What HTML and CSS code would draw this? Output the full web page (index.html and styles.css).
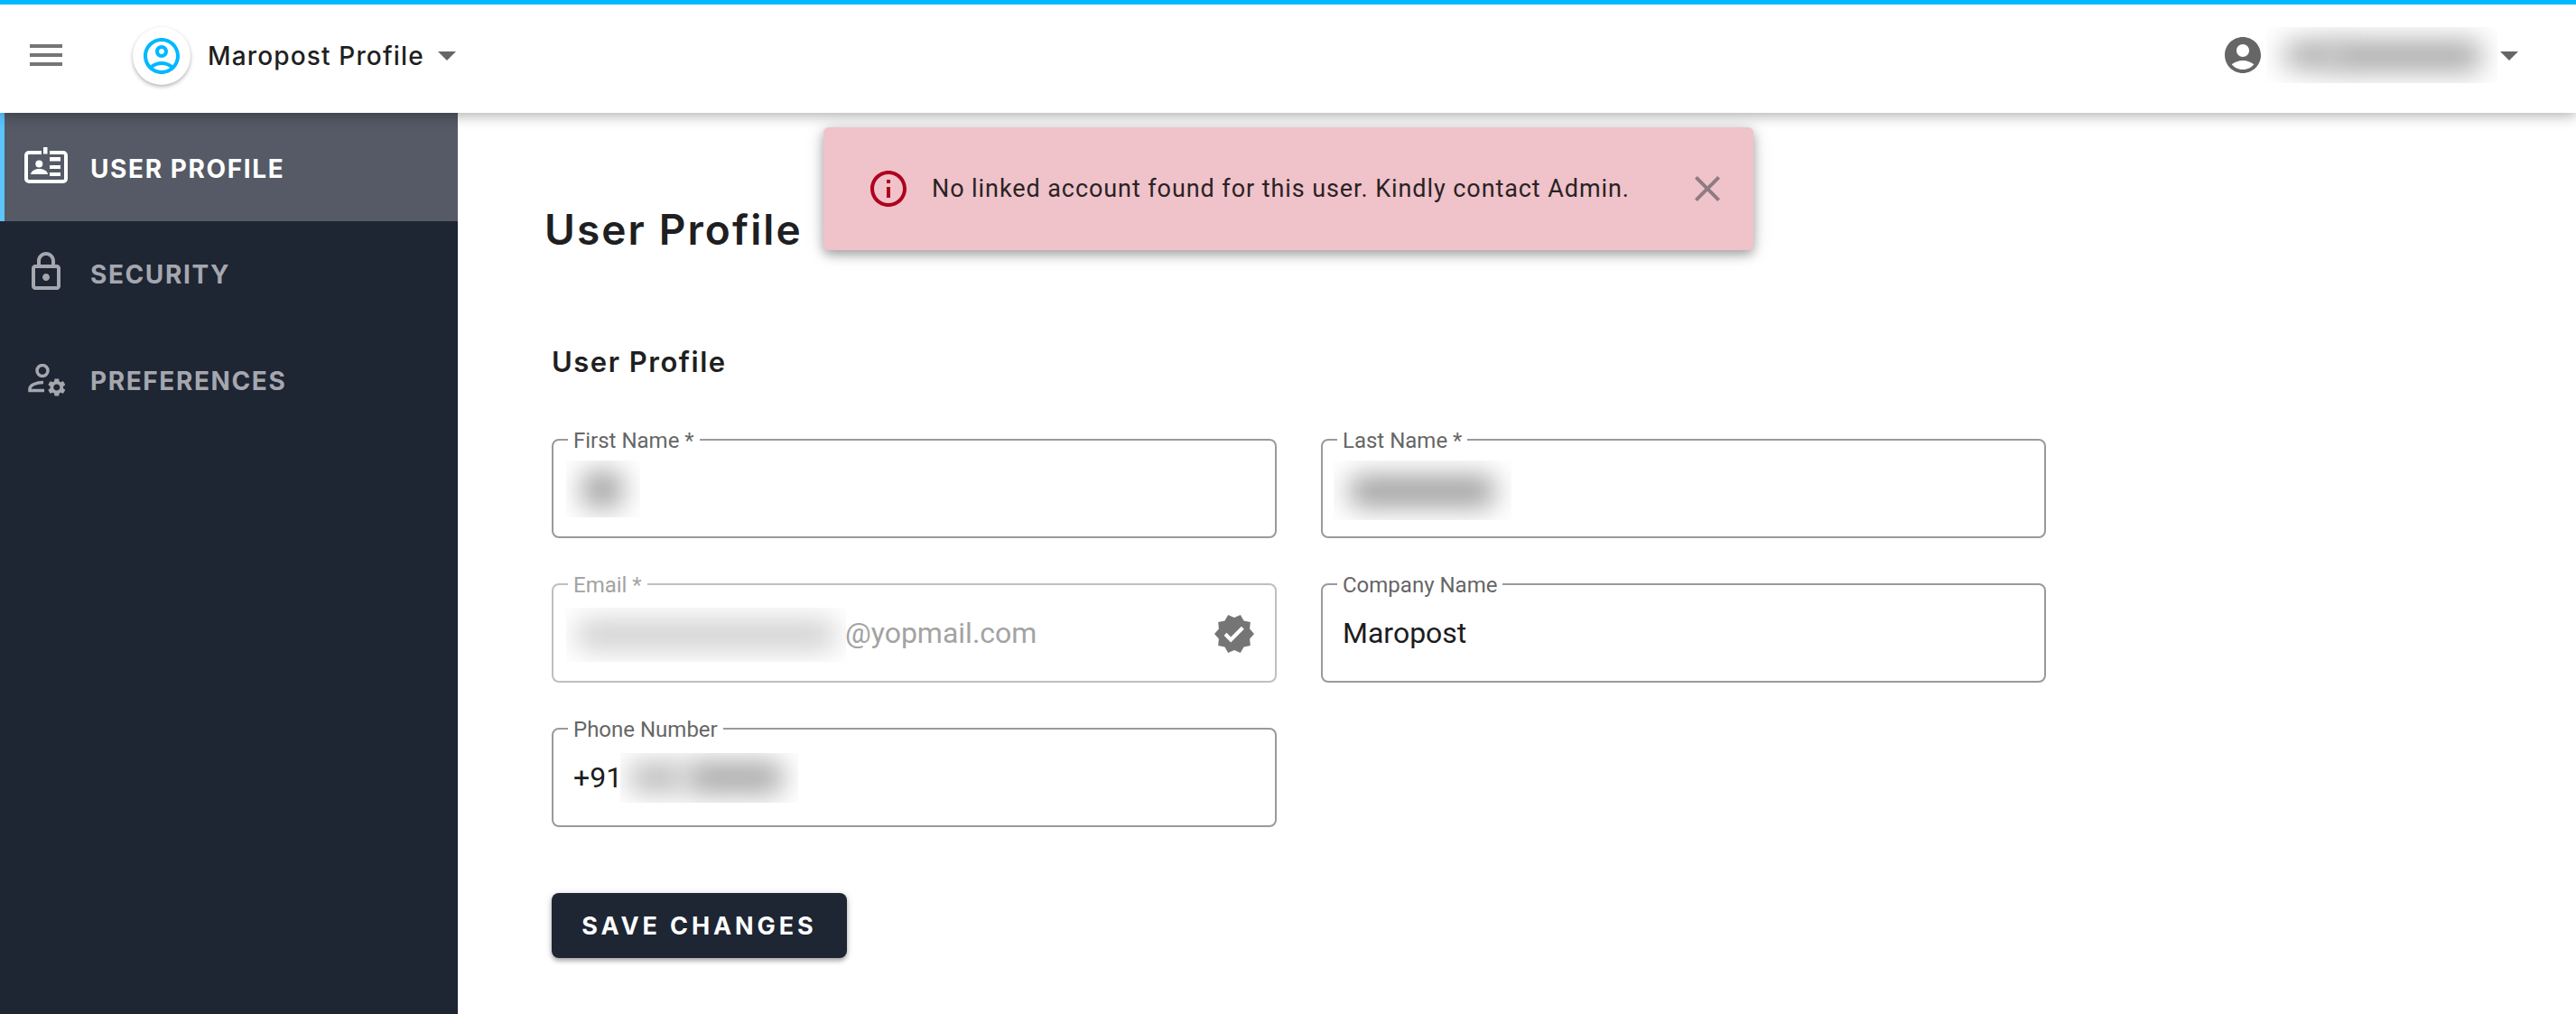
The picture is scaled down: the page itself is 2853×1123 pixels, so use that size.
FILE: index.html
```html
<!DOCTYPE html>
<html lang="en">
<head>
<meta charset="utf-8">
<title>User Profile</title>
<link rel="stylesheet" href="styles.css">
</head>
<body>
<header class="topbar">
  <svg class="menu-icon" viewBox="0 0 24 24"><path d="M3 18h18v-2H3v2zm0-5h18v-2H3v2zm0-7v2h18V6H3z"/></svg>
  <div class="app-badge">
    <svg class="app-icon" viewBox="0 0 24 24"><path d="M12 2C6.48 2 2 6.48 2 12s4.48 10 10 10 10-4.48 10-10S17.52 2 12 2zM7.35 18.5C8.66 17.56 10.26 17 12 17s3.34.56 4.65 1.5C15.34 19.44 13.74 20 12 20s-3.34-.56-4.65-1.5zm10.79-1.38C16.45 15.8 14.32 15 12 15s-4.45.8-6.14 2.12C4.7 15.73 4 13.95 4 12c0-4.42 3.58-8 8-8s8 3.58 8 8c0 1.95-.7 3.73-1.86 5.12zM12 6c-1.93 0-3.5 1.57-3.5 3.5S10.07 13 12 13s3.5-1.57 3.5-3.5S13.93 6 12 6zm0 5c-.83 0-1.5-.67-1.5-1.5S11.17 8 12 8s1.5.67 1.5 1.5S12.83 11 12 11z"/></svg>
  </div>
  <span class="app-name">Maropost Profile</span>
  <svg class="caret caret-app" viewBox="7 10 10 5"><path d="M7 10l5 5 5-5z"/></svg>
  <div class="account">
    <svg class="account-icon" viewBox="0 0 24 24"><path d="M12 2C6.48 2 2 6.48 2 12s4.48 10 10 10 10-4.48 10-10S17.52 2 12 2zm0 4c1.93 0 3.5 1.57 3.5 3.5S13.93 13 12 13s-3.5-1.57-3.5-3.5S10.07 6 12 6zm0 14c-2.03 0-4.43-.82-6.14-2.88C7.55 15.8 9.68 15 12 15s4.45.8 6.14 2.12C16.43 19.18 14.03 20 12 20z"/></svg>
    <div class="redact redact-account"><i class="smear smear-a"></i><i class="smear smear-b"></i></div>
    <svg class="caret caret-account" viewBox="7 10 10 5"><path d="M7 10l5 5 5-5z"/></svg>
  </div>
</header>

<div class="shell">
  <nav class="sidebar">
    <a class="nav-item active">
      <span class="nav-icon">
        <svg class="icon-card" viewBox="0 0 48 40">
          <path class="card-frame" d="M19 6H5a3 3 0 0 0-3 3v26a3 3 0 0 0 3 3h38a3 3 0 0 0 3-3V9a3 3 0 0 0-3-3H28"/>
          <rect class="card-fill" x="21" y="0" width="4.500" height="7.500"/>
          <circle class="card-fill" cx="16.300" cy="18.500" r="4"/>
          <path class="card-fill" d="M7 30c.5-3.500 4.500-6 9.500-6s9 2.500 9.500 6z"/>
          <rect class="card-fill" x="28" y="11" width="12" height="4.500"/>
          <rect class="card-fill" x="28" y="20" width="12" height="4"/>
          <rect class="card-fill" x="28" y="28" width="12" height="4"/>
        </svg>
      </span>
      <span>USER PROFILE</span>
    </a>
    <a class="nav-item">
      <span class="nav-icon">
        <svg class="icon-lock" viewBox="4 1 16 21"><path d="M18 8h-1V6c0-2.760-2.240-5-5-5S7 3.240 7 6v2H6c-1.100 0-2 .9-2 2v10c0 1.100.9 2 2 2h12c1.100 0 2-.9 2-2V10c0-1.100-.9-2-2-2zM9 6c0-1.660 1.340-3 3-3s3 1.340 3 3v2H9V6zm9 14H6V10h12v10zm-6-3c1.100 0 2-.9 2-2s-.9-2-2-2-2 .9-2 2 .9 2 2 2z"/></svg>
      </span>
      <span>SECURITY</span>
    </a>
    <a class="nav-item">
      <span class="nav-icon">
        <svg class="icon-pref" viewBox="0 0 42 36">
          <circle class="pref-line" cx="16" cy="7.500" r="6"/>
          <path class="pref-line" d="M17 20.500C9 20.500 2 23.500 2 27.500v2H18"/>
          <g transform="translate(19.800 14)"><path d="M19.140 12.940c.04-.3.06-.61.06-.94 0-.32-.02-.64-.07-.94l2.030-1.580c.18-.14.23-.41.12-.61l-1.920-3.320c-.12-.22-.37-.29-.59-.22l-2.390.96c-.5-.38-1.030-.7-1.620-.94l-.36-2.540c-.04-.24-.24-.41-.48-.41h-3.840c-.24 0-.43.17-.47.41l-.36 2.540c-.59.24-1.130.57-1.620.94l-2.390-.96c-.22-.08-.47 0-.59.22L2.740 8.870c-.12.21-.08.47.12.61l2.030 1.580c-.05.3-.09.63-.09.94s.02.64.07.94l-2.030 1.580c-.18.14-.23.41-.12.61l1.920 3.320c.12.22.37.29.59.22l2.390-.96c.5.38 1.030.7 1.620.94l.36 2.540c.05.24.24.41.48.41h3.840c.24 0 .44-.17.47-.41l.36-2.540c.59-.24 1.130-.56 1.620-.94l2.390.96c.22.08.47 0 .59-.22l1.920-3.320c.12-.22.07-.47-.12-.61l-2.010-1.580zM12 15.600c-1.980 0-3.600-1.620-3.600-3.600s1.620-3.600 3.600-3.600 3.600 1.620 3.600 3.600-1.620 3.600-3.600 3.600z"/></g>
        </svg>
      </span>
      <span>PREFERENCES</span>
    </a>
  </nav>

  <main class="content">
    <h1 class="page-title">User Profile</h1>
    <h2 class="section-title">User Profile</h2>
    <form class="form-grid">
      <div class="field">
        <span class="field-label">First Name *</span>
        <div class="redact redact-first"><i class="smear smear-c"></i></div>
      </div>
      <div class="field">
        <span class="field-label">Last Name *</span>
        <div class="redact redact-last"><i class="smear smear-d"></i></div>
      </div>
      <div class="field disabled">
        <span class="field-label">Email *</span>
        <div class="redact redact-email"><i class="smear smear-e"></i></div>
        <span class="field-value">@yopmail.com</span>
        <svg class="verified" viewBox="0 0 24 24"><path d="M23 11.990l-2.440-2.790.34-3.690-3.610-.82-1.890-3.200L12 2.960 8.600 1.500 6.710 4.690 3.100 5.500l.34 3.700L1 11.990l2.440 2.790-.34 3.700 3.610.82L8.600 22.500l3.400-1.470 3.400 1.460 1.890-3.190 3.610-.82-.34-3.690L23 11.990zm-12.910 4.720l-3.800-3.810 1.480-1.480 2.320 2.330 5.850-5.870 1.480 1.480-7.330 7.350z"/></svg>
      </div>
      <div class="field">
        <span class="field-label">Company Name</span>
        <span class="field-value">Maropost</span>
      </div>
      <div class="field">
        <span class="field-label">Phone Number</span>
        <span class="field-value">+91</span>
        <div class="redact redact-phone"><i class="smear smear-f"></i><i class="smear smear-g"></i></div>
      </div>
    </form>
    <button class="save-button" type="button">SAVE CHANGES</button>
  </main>
</div>

<div class="toast">
  <svg class="toast-icon" viewBox="0 0 24 24"><path d="M11 7h2v2h-2zm0 4h2v6h-2zm1-9C6.480 2 2 6.480 2 12s4.480 10 10 10 10-4.480 10-10S17.520 2 12 2zm0 18c-4.410 0-8-3.590-8-8s3.590-8 8-8 8 3.590 8 8-3.590 8-8 8z"/></svg>
  <span class="toast-text">No linked account found for this user. Kindly contact Admin.</span>
  <svg class="toast-close" viewBox="5 5 14 14"><path d="M19 6.410L17.590 5 12 10.590 6.410 5 5 6.410 10.590 12 5 17.590 6.410 19 12 13.410 17.590 19 19 17.590 13.410 12z"/></svg>
</div>
</body>
</html>
```
FILE: styles.css
```css
* { box-sizing: border-box; }
html, body { margin: 0; height: 100%; }
body {
  background: #fff;
  color: #1c1c1f;
  font-family: Roboto, "Liberation Sans", sans-serif;
  overflow: hidden;
}

/* Top bar */
.topbar {
  position: relative;
  z-index: 2;
  display: flex;
  align-items: center;
  height: 125px;
  padding: 0 64px 8px 27px;
  background: #fff;
  border-top: 5px solid #00b8ff;
  box-shadow: 0 3px 14px rgba(0, 0, 0, .32);
}
.menu-icon { width: 48px; height: 48px; fill: #757575; }
.app-badge {
  display: flex;
  align-items: center;
  justify-content: center;
  width: 64px;
  height: 64px;
  margin: 2px 0 0 72px;
  border-radius: 50%;
  background: #fff;
  box-shadow: 0 2px 4px rgba(0, 0, 0, .3);
}
.app-icon { width: 48px; height: 48px; fill: #00b8ff; }
.app-name {
  margin: 2px 0 0 19px;
  font-family: Inter, sans-serif;
  font-size: 28px;
  font-weight: 500;
  letter-spacing: 1.150px;
  color: #1f1f22;
}
.caret { width: 20px; height: 10px; fill: #666; flex: none; margin-top: 2px; }
.caret-app { margin-left: 15px; }
.account { display: flex; align-items: center; margin-left: auto; }
.account-icon { width: 48px; height: 48px; fill: #666; }

/* Redacted values */
.redact { position: relative; overflow: hidden; flex: none; }
.smear { position: absolute; display: block; filter: blur(15px); border-radius: 8px; }
.redact-account { width: 256px; height: 62px; margin: 0 3px 0 2px; }
.smear-a { left: 20px; top: 16px; width: 60px; height: 30px; background: #aaa; }
.smear-b { left: 72px; top: 15px; width: 166px; height: 34px; background: #a8a8a8; }
.redact-first { position: absolute; left: 14px; top: 22px; width: 82px; height: 63px; }
.smear-c { left: 18px; top: 12px; width: 44px; height: 40px; background: #a0a0a0; }
.redact-last { position: absolute; left: 12px; top: 22px; width: 197px; height: 66px; }
.smear-d { left: 18px; top: 17px; width: 160px; height: 34px; background: #9c9c9c; }
.redact-email { position: absolute; left: 14px; top: 25px; width: 310px; height: 60px; }
.smear-e { left: 12px; top: 13px; width: 286px; height: 34px; background: #d0d0d0; }
.redact-phone { position: absolute; left: 74px; top: 26px; width: 197px; height: 55px; }
.smear-f { left: 10px; top: 10px; width: 60px; height: 34px; background: #bcbcbc; }
.smear-g { left: 74px; top: 9px; width: 106px; height: 36px; background: #a8a8a8; }

/* Shell */
.shell { display: flex; height: calc(100% - 125px); }
.sidebar { flex: none; width: 507px; background: #1e2533; }
.nav-item {
  display: flex;
  align-items: center;
  height: 118px;
  font-family: Inter, sans-serif;
  font-size: 28px;
  font-weight: 700;
  letter-spacing: 1.600px;
  color: #a5a7ae;
}
.nav-item.active {
  height: 120px;
  padding-top: 4px;
  color: #fff;
  background: #555a66;
  box-shadow: inset 5px 0 0 #5cc4ff;
}
.nav-icon { display: flex; justify-content: center; flex: none; width: 100px; padding-left: 2px; }
.icon-card { width: 48px; height: 40px; fill: none; margin-top: -8px; }
.card-frame { fill: none; stroke: #fff; stroke-width: 4; }
.card-fill { fill: #fff; }
.icon-lock { width: 32px; height: 42px; fill: #a5a7ae; margin-top: -8px; }
.icon-pref { width: 42px; height: 36px; fill: #a5a7ae; margin: -2px 0 0 2px; }
.pref-line { fill: none; stroke: #a5a7ae; stroke-width: 3.500; }

/* Content */
.content { flex: 1; padding: 109px 0 0 96px; }
.page-title {
  margin: 0;
  font-family: Inter, sans-serif;
  font-size: 46px;
  line-height: 40px;
  font-weight: 600;
  letter-spacing: 2.100px;
  color: #1f1f22;
}
.section-title {
  margin: 111px 0 0 8px;
  font-family: Inter, sans-serif;
  font-size: 31px;
  line-height: 32px;
  font-weight: 600;
  letter-spacing: 1.500px;
  color: #1f1f22;
}
.form-grid {
  display: grid;
  grid-template-columns: 803px 803px;
  grid-auto-rows: 110px;
  gap: 50px 49px;
  margin: 69px 0 0 8px;
}
.field {
  position: relative;
  display: flex;
  align-items: center;
  padding: 0 22px;
  border: 2px solid #9a9a9a;
  border-radius: 8px;
}
.field-label {
  position: absolute;
  top: -15px;
  left: 16px;
  padding: 0 6px;
  background: #fff;
  font-size: 24px;
  line-height: 30px;
  color: #666;
}
.field-value { font-size: 32px; color: #1c1c1f; }
.field.disabled { border-color: #bfbfbf; }
.field.disabled .field-label,
.field.disabled .field-value { color: #a3a3a3; }
.field.disabled .field-value { margin-left: 301px; }
.verified { position: absolute; right: 21px; top: 30px; width: 48px; height: 48px; fill: #757575; }
.save-button {
  display: block;
  width: 327px;
  height: 72px;
  margin: 73px 0 0 8px;
  border: 0;
  border-radius: 8px;
  background: #1e2533;
  color: #fff;
  font-family: Inter, sans-serif;
  font-size: 27px;
  font-weight: 700;
  letter-spacing: 3.900px;
  box-shadow: 0 3px 5px rgba(0, 0, 0, .3), 0 1px 10px rgba(0, 0, 0, .12);
}

/* Toast */
.toast {
  position: absolute;
  z-index: 3;
  left: 912px;
  top: 141px;
  display: flex;
  align-items: center;
  width: 1030px;
  height: 136px;
  padding: 0 37px 0 48px;
  border-radius: 6px;
  background: #efc3c9;
  box-shadow: 0 5px 12px rgba(0, 0, 0, .3), 0 2px 22px rgba(0, 0, 0, .14);
}
.toast-icon { width: 48px; height: 48px; fill: #b0001e; flex: none; }
.toast-text {
  margin-left: 24px;
  font-size: 27px;
  letter-spacing: .92px;
  color: #2a2226;
}
.toast-close { margin-left: auto; width: 28px; height: 28px; fill: #8f7b84; flex: none; }
```
